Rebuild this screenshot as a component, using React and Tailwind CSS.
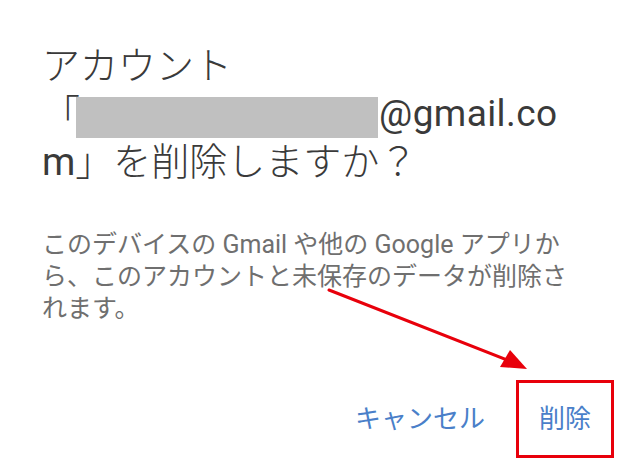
export default function App() {
  const font = { fontFamily: 'Roboto, "Noto Sans CJK JP", sans-serif' };
  return (
    <div
      className="relative w-[621px] h-[466px] bg-white overflow-hidden flex flex-col pl-[42px] pt-[42px]"
      style={font}
    >
      <div className="text-[38px] font-light text-[#3a3a3a] leading-[48px] whitespace-nowrap">
        <div className="h-[48px] flex items-center">アカウント</div>
        <div className="h-[48px] flex items-center">
          <span>「</span>
          <span className="self-end -ml-[4px] w-[302px] h-[41px] bg-[#c0c0c0]"></span>
          <span className="ml-[1px] text-[37px] font-normal tracking-[0.4px]">@gmail.co</span>
        </div>
        <div className="h-[48px] flex items-center">
          <span className="font-normal">m</span>」を削除しますか？
        </div>
      </div>

      <div className="mt-[43px] text-[25px] leading-[32px] text-[#6f6f6f] whitespace-nowrap">
        <div>このデバイスの Gmail や他の Google アプリか</div>
        <div>ら、このアカウントと未保存のデータが削除さ</div>
        <div>れます。</div>
      </div>

      <div className="mt-[55px] flex justify-end items-center pr-[7px] text-[26px] text-[#4a7fc9]">
        <span className="mr-[31px]">キャンセル</span>
        <div className="w-[98px] h-[78px] border-[3px] border-[#e8000b] flex items-center justify-center">
          削除
        </div>
      </div>

      <svg
        className="absolute left-0 top-0 pointer-events-none"
        width="621"
        height="466"
        viewBox="0 0 621 466"
      >
        <line x1="329" y1="290" x2="512" y2="362" stroke="#e8000b" strokeWidth="3" strokeLinecap="round" />
        <polygon points="527,369 500,367 510,350" fill="#e8000b" />
      </svg>
    </div>
  );
}
